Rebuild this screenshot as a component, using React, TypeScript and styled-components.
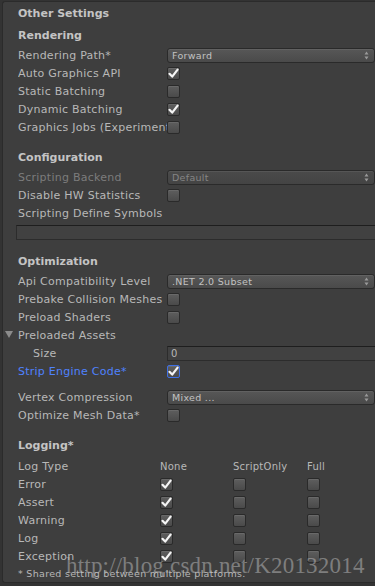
import React from "react";
import styled, { createGlobalStyle, css } from "styled-components";

const GlobalStyle = createGlobalStyle`
  html, body {
    margin: 0;
    padding: 0;
    background: #333333;
    width: 375px;
    height: 586px;
    overflow: hidden;
  }
  * { box-sizing: border-box; }
`;

const Panel = styled.div`
  position: relative;
  margin: 1px 0 0 2px;
  height: 582px;
  background: #3e3e3e;
  border-left: 1px solid #2b2b2b;
  border-top: 1px solid #2b2b2b;
  border-bottom: 1px solid #2b2b2b;
  border-radius: 3px 0 0 3px;
  padding: 3px 0 0 15px;
  font-family: "DejaVu Sans", "Liberation Sans", sans-serif;
  font-size: 11px;
  letter-spacing: 0.25px;
  color: #b8b8b8;
  overflow: hidden;
`;

const Title = styled.div`
  height: 18px;
  line-height: 17px;
  font-weight: bold;
  letter-spacing: 0;
  color: #c4c4c4;
`;

const Header = styled.div<{ $top?: number; $bottom?: number }>`
  height: 18px;
  line-height: 18px;
  font-weight: bold;
  letter-spacing: 0;
  color: #c4c4c4;
  margin-top: ${({ $top }) => $top ?? 13}px;
  margin-bottom: ${({ $bottom }) => $bottom ?? 1}px;
`;

const Row = styled.div`
  position: relative;
  display: grid;
  grid-template-columns: 149px 1fr;
  align-items: center;
  height: 18px;
`;

const Label = styled.div<{ $tone?: "disabled" | "focus"; $indent?: number }>`
  white-space: nowrap;
  overflow: hidden;
  padding-left: ${({ $indent }) => $indent ?? 0}px;
  color: ${({ $tone }) =>
    $tone === "disabled" ? "#7c7c7c" : $tone === "focus" ? "#4f82ff" : "#b8b8b8"};
`;

const Foldout = styled.span`
  position: absolute;
  left: -13px;
  top: 5px;
  width: 0;
  height: 0;
  border-left: 4px solid transparent;
  border-right: 4px solid transparent;
  border-top: 7px solid #8c8c8c;
`;

const Box = styled.div<{ $focus?: boolean }>`
  width: 13px;
  height: 13px;
  border-radius: 2px;
  border: 1px solid ${({ $focus }) => ($focus ? "#3d6fe6" : "#2a2a2a")};
  background: linear-gradient(#5e5e5e, #4a4a4a);
  box-shadow: inset 0 1px 0 rgba(255, 255, 255, 0.08);
  display: flex;
  align-items: center;
  justify-content: center;
`;

const Check = ({ on, focus }: { on?: boolean; focus?: boolean }) => (
  <Box $focus={focus}>
    {on && (
      <svg width="11" height="11" viewBox="0 0 11 11">
        <path
          d="M1.5 5.8 L4.2 8.6 L9.6 1.6"
          fill="none"
          stroke="#f4f4f4"
          strokeWidth="2.2"
          strokeLinecap="round"
          strokeLinejoin="round"
        />
      </svg>
    )}
  </Box>
);

const Popup = styled.div<{ $disabled?: boolean }>`
  width: 208px;
  height: 15px;
  border-radius: 3px;
  border: 1px solid #2a2a2a;
  background: linear-gradient(#575757, #4a4a4a);
  box-shadow: inset 0 1px 0 rgba(255, 255, 255, 0.07);
  display: flex;
  align-items: center;
  justify-content: space-between;
  padding: 0 5px 0 4px;
  font-size: 9.5px;
  letter-spacing: 0.3px;
  color: ${({ $disabled }) => ($disabled ? "#858585" : "#c2c2c2")};
  ${({ $disabled }) =>
    $disabled &&
    css`
      background: linear-gradient(#4a4a4a, #444444);
    `}
`;

const Arrows = () => (
  <svg width="5" height="9" viewBox="0 0 5 9">
    <path d="M2.5 0.5 L4.5 3.5 L0.5 3.5 Z M2.5 8.5 L4.5 5.5 L0.5 5.5 Z" fill="#9a9a9a" />
  </svg>
);

const Field = styled.div<{ $wide?: boolean }>`
  height: 15px;
  width: ${({ $wide }) => ($wide ? "360px" : "210px")};
  margin-left: ${({ $wide }) => ($wide ? "-2px" : "0")};
  margin-top: ${({ $wide }) => ($wide ? "3px" : "0")};
  background: #414141;
  border: 1px solid #2c2c2c;
  border-top-color: #1e1e1e;
  padding-left: 3px;
  line-height: 13px;
  font-size: 10px;
  color: #b8b8b8;
`;

const Spacer = styled.div<{ $h: number }>`
  height: ${({ $h }) => $h}px;
`;

const LogRow = styled.div`
  display: grid;
  grid-template-columns: 142px 73px 74px 1fr;
  align-items: center;
  height: 18px;
`;

const ColHead = styled.div`
  font-size: 10px;
  color: #b8b8b8;
`;

const Note = styled.div`
  height: 18px;
  line-height: 18px;
  font-size: 9.5px;
  letter-spacing: 0.3px;
  color: #b8b8b8;
`;

const Watermark = styled.div`
  position: absolute;
  left: 63px;
  top: 551px;
  font-family: "Liberation Serif", "DejaVu Serif", serif;
  font-size: 23px;
  letter-spacing: 0.2px;
  color: rgba(190, 190, 190, 0.5);
  pointer-events: none;
  white-space: nowrap;
`;

type Item = {
  label: string;
  check?: boolean;
  popup?: string;
};

const rendering: Item[] = [
  { label: "Rendering Path*", popup: "Forward" },
  { label: "Auto Graphics API", check: true },
  { label: "Static Batching", check: false },
  { label: "Dynamic Batching", check: true },
  { label: "Graphics Jobs (Experimental)", check: false },
];

const logs = ["Error", "Assert", "Warning", "Log", "Exception"];

const SettingRow = ({ label, check, popup }: Item) => (
  <Row>
    <Label>{label}</Label>
    {popup ? (
      <Popup>
        {popup}
        <Arrows />
      </Popup>
    ) : (
      <Check on={check} />
    )}
  </Row>
);

export default function App() {
  return (
    <>
      <GlobalStyle />
      <Panel>
        <Title>Other Settings</Title>
        <Header $top={4}>Rendering</Header>
        {rendering.map((r) => (
          <SettingRow key={r.label} {...r} />
        ))}

        <Header>Configuration</Header>
        <Row>
          <Label $tone="disabled">Scripting Backend</Label>
          <Popup $disabled>
            Default
            <Arrows />
          </Popup>
        </Row>
        <SettingRow label="Disable HW Statistics" check={false} />
        <Row>
          <Label>Scripting Define Symbols</Label>
        </Row>
        <Field $wide />

        <Header>Optimization</Header>
        <SettingRow label="Api Compatibility Level" popup=".NET 2.0 Subset" />
        <SettingRow label="Prebake Collision Meshes" check={false} />
        <SettingRow label="Preload Shaders" check={false} />
        <Row>
          <Foldout />
          <Label>Preloaded Assets</Label>
        </Row>
        <Row>
          <Label $indent={15}>Size</Label>
          <Field>0</Field>
        </Row>
        <Row>
          <Label $tone="focus">Strip Engine Code*</Label>
          <Check on focus />
        </Row>
        <Spacer $h={8} />
        <SettingRow label="Vertex Compression" popup="Mixed ..." />
        <SettingRow label="Optimize Mesh Data*" check={false} />

        <Header $bottom={2}>Logging*</Header>
        <LogRow>
          <Label>Log Type</Label>
          <ColHead>None</ColHead>
          <ColHead>ScriptOnly</ColHead>
          <ColHead>Full</ColHead>
        </LogRow>
        {logs.map((l) => (
          <LogRow key={l}>
            <Label>{l}</Label>
            <Check on />
            <Check />
            <Check />
          </LogRow>
        ))}
        <Note>* Shared setting between multiple platforms.</Note>
        <Watermark>http://blog.csdn.net/K20132014</Watermark>
      </Panel>
    </>
  );
}
